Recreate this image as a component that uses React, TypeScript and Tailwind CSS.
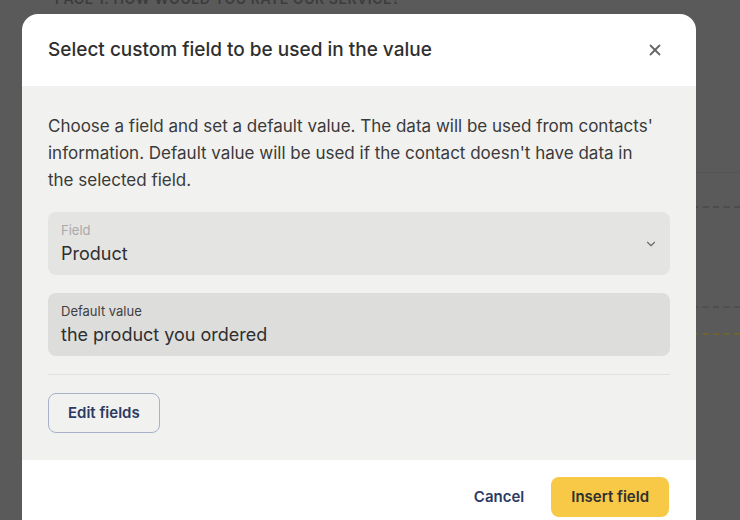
import { X, ChevronDown } from 'lucide-react'

const App = () => {
  return (
    <div className="relative h-[520px] w-full overflow-hidden bg-[#5a5a5a] font-['Inter','Noto_Sans',sans-serif]">
      {/* Page underneath the overlay */}
      <div className="flex flex-col">
        <p className="-mt-[12px] pl-[55px] text-[14px] font-semibold uppercase tracking-[0.04em] text-[#3c3c3c]">
          Page 1: How would you rate our service?
        </p>
        <div className="ml-[640px] flex flex-col">
          <div className="mt-[163px] border-t border-[#555555]" />
          <div className="mt-[33px] border-t-2 border-dashed border-[#4c4c4c]" />
          <div className="mt-[98px] border-t-2 border-dashed border-[#4f4f4f]" />
          <div className="mt-[25px] border-t-2 border-dashed border-[#6d6433]" />
        </div>
      </div>

      {/* Dialog */}
      <div className="absolute left-[22px] top-[14px] w-[674px] overflow-hidden rounded-2xl bg-white">
        <div className="flex h-[72px] items-center justify-between pl-[26px] pr-[32px]">
          <h2 className="text-[19px] font-medium text-[#2f2f2f]">Select custom field to be used in the value</h2>
          <X className="h-[18px] w-[18px] text-[#666666]" strokeWidth={2.4} />
        </div>

        <div className="flex flex-col bg-[#f1f1f0] px-[26px] pt-[27px] pb-[27px]">
          <p className="text-[17px] leading-[27px] text-[#3a3a3a]">
            Choose a field and set a default value. The data will be used from contacts'
            <br />
            information. Default value will be used if the contact doesn't have data in
            <br />
            the selected field.
          </p>

          <div className="mt-[18px] flex items-center justify-between rounded-lg bg-[#e4e4e3] pl-[13px] pr-[12px] pt-[10px] pb-[9px]">
            <div className="flex flex-col gap-[4px]">
              <span className="text-[13px] leading-[16px] text-[#a9a9a9]">Field</span>
              <span className="text-[18px] leading-[24px] text-[#2f2f2f]">Product</span>
            </div>
            <ChevronDown className="h-[14px] w-[14px] text-[#6a6a6a]" strokeWidth={2} />
          </div>

          <div className="mt-[18px] flex flex-col gap-[4px] rounded-lg bg-[#dddddc] pl-[13px] pt-[10px] pb-[9px]">
            <span className="text-[13px] leading-[16px] text-[#3f3f3f]">Default value</span>
            <span className="text-[18px] leading-[24px] text-[#2f2f2f]">the product you ordered</span>
          </div>

          <div className="mt-[18px] border-t border-[#e0e0df]" />

          <div className="mt-[18px] flex">
            <button className="h-[40px] rounded-lg border border-[#a9b1c9] px-[19px] text-[15px] font-semibold text-[#2c3a62]">
              Edit fields
            </button>
          </div>
        </div>

        <div className="flex items-center justify-end gap-[27px] bg-white pt-[17px] pb-[24px] pr-[27px]">
          <button className="text-[15px] font-semibold text-[#2c3a62]">Cancel</button>
          <button className="h-[40px] rounded-lg bg-[#f7c947] px-[20px] text-[15px] font-semibold text-[#2f2f2f]">
            Insert field
          </button>
        </div>
      </div>
    </div>
  )
}

export default App
